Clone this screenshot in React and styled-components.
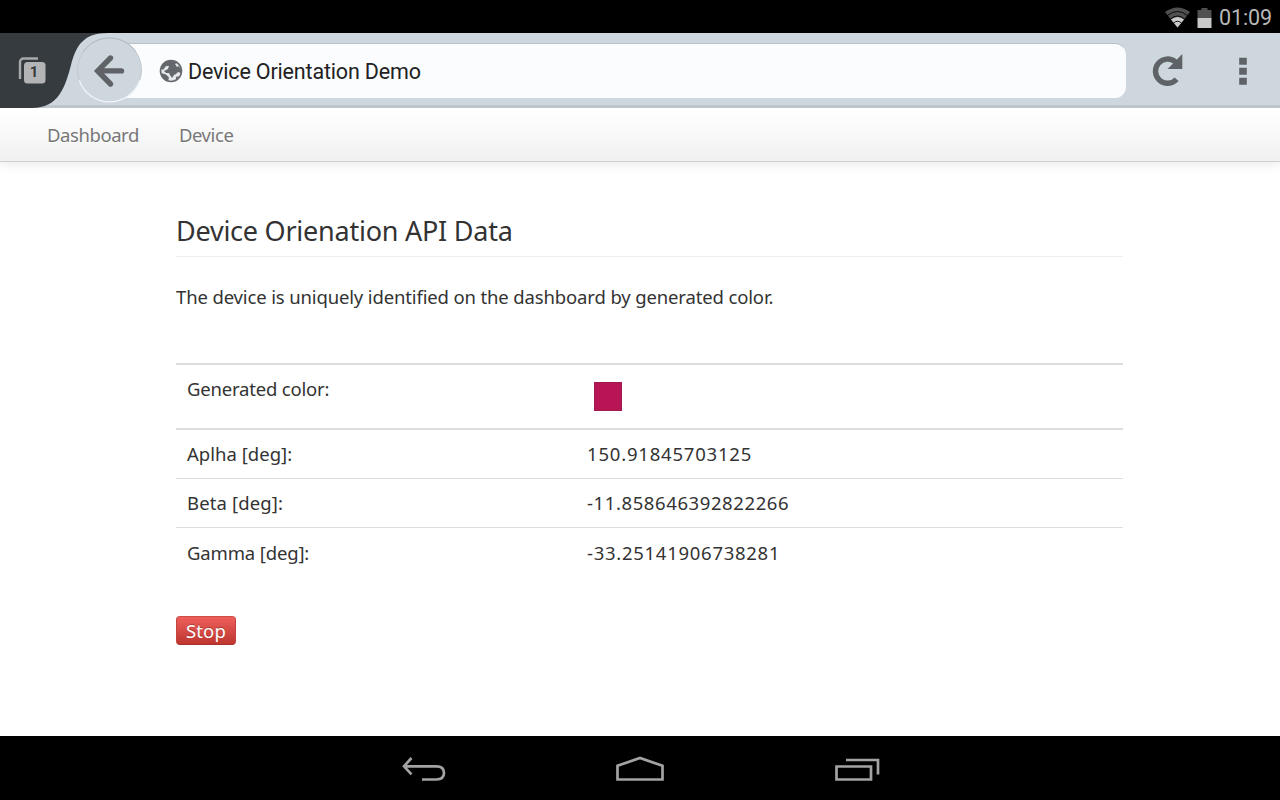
import React from "react";
import styled, { createGlobalStyle } from "styled-components";

const Global = createGlobalStyle`
  * { box-sizing: border-box; }
  body { margin: 0; background: #000; }
`;

const Screen = styled.div`
  width: 1280px;
  height: 800px;
  display: flex;
  flex-direction: column;
  overflow: hidden;
  background: #fff;
  color: #333;
  font-family: "Noto Sans", sans-serif;
  font-size: 18.5px;
`;

const StatusBar = styled.header`
  height: 33px;
  flex: none;
  display: flex;
  align-items: center;
  justify-content: flex-end;
  padding: 2px 8px 0 0;
  background: #000;
`;

const StatusIcons = styled.svg`
  width: 50px;
  height: 24px;
  margin-right: 4px;
`;

const Clock = styled.span`
  font: 400 21.5px/30px Roboto, sans-serif;
  letter-spacing: -0.1px;
  color: #b8b8b8;
`;

const Toolbar = styled.div`
  position: relative;
  height: 75px;
  flex: none;
  display: flex;
  align-items: flex-start;
  padding: 10px 0 0 110px;
  background: #ced6de;
  border-bottom: 3px solid #bdc5cd;
`;

const TabsShape = styled.svg`
  position: absolute;
  left: 0;
  top: 0;
  width: 150px;
  height: 75px;
`;

const TabCount = styled.span`
  position: absolute;
  left: 24px;
  top: 29px;
  width: 20px;
  text-align: center;
  font: 700 15px/21px Roboto, sans-serif;
  color: #363b40;
`;

const AddressBar = styled.div`
  width: 1016px;
  height: 55px;
  display: flex;
  align-items: center;
  padding-left: 49px;
  background: #fafcfe;
  border-top: 1px solid #b9c1c9;
  border-radius: 0 11px 11px 0;
`;

const Globe = styled.svg`
  width: 24px;
  height: 24px;
  margin-right: 5px;
`;

const PageTitle = styled.span`
  font: 400 21.5px/30px Roboto, sans-serif;
  letter-spacing: -0.17px;
  padding-top: 2px;
  color: #222;
`;

const ToolIcon = styled.svg`
  width: ${(p) => p.$w}px;
  height: 40px;
  margin: 8px 0 0 ${(p) => p.$gap}px;
`;

const Nav = styled.nav`
  height: 54px;
  flex: none;
  display: flex;
  gap: 40px;
  padding-left: 47px;
  line-height: 54px;
  color: #777;
  background: linear-gradient(#fff, #f1f1f1);
  border-bottom: 1px solid #d0d0d0;
  box-shadow: 0 1px 13px rgba(0, 0, 0, 0.1);
`;

const NavLink = styled.a`
  letter-spacing: -0.43px;
  text-shadow: 0 1px 0 #fff;
`;

const Main = styled.main`
  flex: 1;
  width: 947px;
  margin-left: 176px;
  padding-top: 46px;
`;

const Heading = styled.h1`
  height: 49px;
  margin: 0;
  font-size: 27px;
  font-weight: 400;
  line-height: 46px;
  letter-spacing: -0.24px;
  border-bottom: 1px solid #eee;
`;

const Intro = styled.p`
  height: 106px;
  margin: 0;
  padding-top: 27px;
  line-height: 26px;
  letter-spacing: -0.14px;
`;

const Table = styled.div`
  height: 214px;
`;

const Row = styled.div`
  display: grid;
  grid-template-columns: 400px 1fr;
  height: ${(p) => p.$h}px;
  padding: ${(p) => p.$pad}px 0 0 11px;
  line-height: 26px;
  border-top: ${(p) => p.$line}px solid #ddd;
`;

const Label = styled.span`
  letter-spacing: ${(p) => p.$track}px;
`;

const Value = styled.span`
  letter-spacing: ${(p) => p.$track}px;
`;

const Swatch = styled.span`
  width: 28px;
  height: 29px;
  margin: 6px 0 0 7px;
  background: #b71553;
  border: 1px solid #9f1a4e;
`;

const StopButton = styled.button`
  width: 60px;
  height: 29px;
  margin-top: 39px;
  padding: 0 0 1px;
  border: 1px solid;
  border-color: #cf4d49 #c4433e #ab302b;
  border-radius: 4px;
  background: linear-gradient(#ee5f5b, #bd362f);
  color: #fff;
  font: 400 18.5px/25px "Noto Sans", sans-serif;
  letter-spacing: 0.15px;
  text-shadow: 0 -1px 0 rgba(0, 0, 0, 0.25);
`;

const SystemNav = styled.footer`
  height: 64px;
  flex: none;
  display: flex;
  align-items: center;
  justify-content: center;
  gap: 166px;
  padding-top: 3px;
  background: #000;
`;

const SystemIcon = styled.svg`
  width: 52px;
  height: 30px;
  fill: none;
  stroke: #a3a3a3;
  stroke-width: 2.7;
`;

const readings = [
  { name: "Aplha [deg]:", value: "150.91845703125", line: 2, h: 50, pad: 11, track: 0.02, valueTrack: 0.8 },
  { name: "Beta [deg]:", value: "-11.858646392822266", line: 1, h: 49, pad: 11, track: 0.13, valueTrack: 0.6 },
  { name: "Gamma [deg]:", value: "-33.25141906738281", line: 1, h: 50, pad: 12, track: -0.15, valueTrack: 0.72 },
];

export default function App() {
  return (
    <Screen>
      <Global />
      <StatusBar>
        <StatusIcons viewBox="0 0 50 24">
          <path d="M0 6Q12.500 -3 25 6L12.500 21.500Z" fill="#505050" />
          <path d="M6 13.500Q12.500 8.500 19 13.500L12.500 21.500Z" fill="#ccc" />
          <path d="M2.500 9.500Q12.500 1.500 22.500 9.500M5.500 13Q12.500 7 19.500 13M8.500 17Q12.500 13.500 16.500 17" fill="none" stroke="#000" strokeWidth="0.9" />
          <path d="M32.500 4h4V2h6v2h4v8h-14Z" fill="#505050" />
          <path d="M32.500 12h14v10h-14Z" fill="#c8c8c8" />
        </StatusIcons>
        <Clock>01:09</Clock>
      </StatusBar>
      <Toolbar>
        <AddressBar>
          <Globe viewBox="0 0 24 24">
            <circle cx="12" cy="12" r="10.5" fill="#e4e7ea" stroke="#64686d" strokeWidth="1.6" />
            <path d="M2 9L5 4L9 2H15L18 4L16 5L18 8L20 7L22 11V14L19 13L17 15L15 16L13 19L11 16L10 14L7 14L5 12L9 10L10 7L7 7L4 11Z" fill="#64686d" />
            <path d="M2 14L7 15.500L10 18.500L9 22L4 19ZM17 18L20 17L17 21Z" fill="#64686d" />
          </Globe>
          <PageTitle>Device Orientation Demo</PageTitle>
        </AddressBar>
        <ToolIcon $w={34} $gap={25} viewBox="0 0 34 40">
          <path d="M25.600 28.200A12.100 12.100 0 1 1 24.500 11" fill="none" stroke="#5f6368" strokeWidth="5.4" />
          <path d="M31.300 3V18H16.600Z" fill="#5f6368" />
        </ToolIcon>
        <ToolIcon $w={10} $gap={53} viewBox="0 0 10 40">
          <path d="M1.200 6.800h7.600v7H1.200ZM1.200 16.800h7.600v7H1.200ZM1.200 26.800h7.600v7H1.200Z" fill="#5f6368" />
        </ToolIcon>
        <TabsShape viewBox="0 0 150 75">
          <path d="M0 0H108C83 0 76 13 71 32C65 55 58 75 32 75H0Z" fill="#363b40" />
          <path d="M20 46V29a3.500 3.500 0 0 1 3.500-3.500H38" fill="none" stroke="#a7a9ab" strokeWidth="2.4" />
          <rect x="24" y="29" width="21.5" height="21.5" rx="3.5" fill="#b3b4b5" />
          <circle cx="109.500" cy="37" r="32" fill="#ced6de" stroke="#c1c8cf" />
          <path d="M83 19A32 32 0 0 1 136 19" fill="none" stroke="#b3bac2" />
          <path d="M79.300 47.500A32 32 0 0 0 139.700 47.500" fill="none" stroke="#f5f8fa" strokeWidth="1.2" />
          <path d="M121.500 37.900H99M110.500 25L97.700 37.900L110.500 51" fill="none" stroke="#5f6368" strokeWidth="5.400" strokeLinecap="round" />
        </TabsShape>
        <TabCount>1</TabCount>
      </Toolbar>
      <Nav>
        <NavLink>Dashboard</NavLink>
        <NavLink>Device</NavLink>
      </Nav>
      <Main>
        <Heading>Device Orienation API Data</Heading>
        <Intro>The device is uniquely identified on the dashboard by generated color.</Intro>
        <Table>
          <Row $h={65} $line={2} $pad={11}>
            <Label $track={-0.19}>Generated color:</Label>
            <Swatch />
          </Row>
          {readings.map((r) => (
            <Row key={r.name} $h={r.h} $line={r.line} $pad={r.pad}>
              <Label $track={r.track}>{r.name}</Label>
              <Value $track={r.valueTrack}>{r.value}</Value>
            </Row>
          ))}
        </Table>
        <StopButton>Stop</StopButton>
      </Main>
      <SystemNav>
        <SystemIcon viewBox="0 0 52 30">
          <path d="M15.500 3L8 11.300L15.500 19.300M7.500 11.300H40.500Q48 11.300 48 17.800T40.500 24.500H26" />
        </SystemIcon>
        <SystemIcon viewBox="0 0 52 30">
          <path d="M3.500 24.500V10.800L26 3L48.500 10.800V24.500Z" />
        </SystemIcon>
        <SystemIcon viewBox="0 0 52 30">
          <path d="M4.500 11.500H39V24.500H4.500ZM14 5H46V19.500" />
        </SystemIcon>
      </SystemNav>
    </Screen>
  );
}
